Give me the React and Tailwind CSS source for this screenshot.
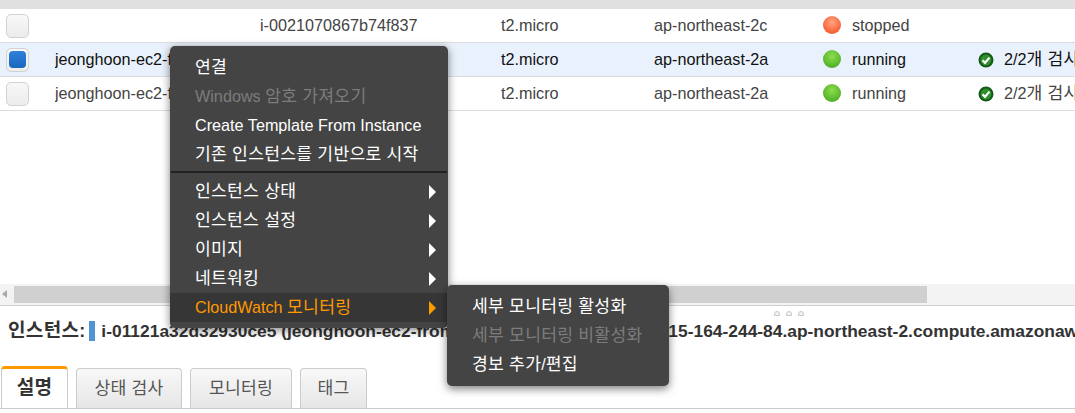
const font = "[font-family:'Liberation_Sans','Noto_Sans_CJK_KR',sans-serif]";

const rows = [
  { name: "", id: "i-0021070867b74f837", az: "ap-northeast-2c", state: "stopped", checks: false, selected: false },
  { name: "jeonghoon-ec2-f", id: "", az: "ap-northeast-2a", state: "running", checks: true, selected: true },
  { name: "jeonghoon-ec2-f", id: "", az: "ap-northeast-2a", state: "running", checks: true, selected: false },
];

// hangul runs render a bit larger than the latin text around them
function Ko({ text }) {
  return text.split(/([가-힣]+(?: [가-힣]+)*)/).map((part, i) =>
    i % 2 ? (
      <span key={i} className="text-[1.06em] tracking-[0.015em]">
        {part}
      </span>
    ) : (
      part
    )
  );
}

function StateDot({ state }) {
  const color =
    state === "running"
      ? "bg-[radial-gradient(circle_at_50%_35%,#8fdc4f,#56b82a_65%,#3f9a1e)]"
      : "bg-[radial-gradient(circle_at_50%_35%,#ffa680,#f8653a_65%,#e04a20)]";
  return <span className={`h-[18px] w-[18px] shrink-0 rounded-full ${color}`} />;
}

function CheckIcon() {
  return (
    <svg width="16" height="16" viewBox="0 0 16 16" className="shrink-0">
      <circle cx="8" cy="8" r="7.5" fill="#14591a" />
      <circle cx="8" cy="8" r="5.5" fill="#2f8f2a" />
      <path d="M4.5 8.2 L7 10.8 L11.5 5.6" fill="none" stroke="#fff" strokeWidth="2.2" />
    </svg>
  );
}

function Row({ row }) {
  return (
    <div
      className={`flex h-[34px] items-center border-b border-[#dcdcdc] ${
        row.selected ? "bg-[#e9f1fc] text-[#111]" : "bg-white text-[#444]"
      }`}
    >
      <div className="ml-[6px] flex h-[24px] w-[23px] shrink-0 items-center justify-center rounded-[5px] border border-[#d2d2d2] bg-gradient-to-b from-[#f8f8f8] to-[#ececec]">
        {row.selected && <span className="h-[17px] w-[17px] rounded-[4px] bg-gradient-to-b from-[#2f80dc] to-[#1a66bd]" />}
      </div>
      <div className="ml-[26px] w-[205px] shrink-0 overflow-hidden whitespace-nowrap">{row.name}</div>
      <div className="w-[241px] shrink-0">{row.id}</div>
      <div className="w-[153px] shrink-0">t2.micro</div>
      <div className="w-[169px] shrink-0">{row.az}</div>
      <div className="flex w-[155px] shrink-0 items-center gap-[11px]">
        <StateDot state={row.state} />
        {row.state}
      </div>
      {row.checks && (
        <div className="flex items-center gap-[10px] whitespace-nowrap">
          <CheckIcon />
          <span>
            <Ko text="2/2개 검사" />
          </span>
        </div>
      )}
    </div>
  );
}

function Arrow({ orange }) {
  return (
    <span
      className={`h-0 w-0 border-y-[7px] border-l-[7px] border-y-transparent ${
        orange ? "border-l-[#ff9900]" : "border-l-white"
      }`}
    />
  );
}

function MenuItem({ label, disabled, arrow, active }) {
  return (
    <div
      className={`flex h-[29px] items-center justify-between pl-[25px] pr-[12px] ${
        active ? "bg-[#363636] text-[#ff9900]" : disabled ? "text-[#7c7c7c]" : "text-white"
      }`}
    >
      <span className="whitespace-nowrap">
        <Ko text={label} />
      </span>
      {arrow && <Arrow orange={active} />}
    </div>
  );
}

function Tab({ label, active }) {
  return (
    <div
      className={
        active
          ? "flex h-[42px] w-[67px] items-center justify-center rounded-t-[4px] border-x border-t-[3px] border-x-[#ccc] border-t-[#ff9900] bg-white text-[18px] font-bold text-[#333]"
          : "flex h-[40px] items-center justify-center rounded-t-[4px] border border-b-0 border-[#ccc] bg-gradient-to-b from-[#f8f8f8] to-[#e6e6e6] text-[#555]"
      }
    >
      <span>
        <Ko text={label} />
      </span>
    </div>
  );
}

export default function App() {
  return (
    <div className={`relative flex h-[413px] w-[1075px] flex-col overflow-hidden bg-white text-[16.2px] ${font}`}>
      <div className="h-[9px] shrink-0 bg-[#e0e0e0]" />
      {rows.map((row, i) => (
        <Row key={i} row={row} />
      ))}

      <div className="mt-[173px] flex h-[22px] shrink-0 items-center border-b border-[#d0d0d0] bg-[#f3f3f3] pb-[1px]">
        <span className="ml-[2px] h-0 w-0 border-y-[4px] border-r-[5px] border-y-transparent border-r-[#aaa]" />
        <div className="ml-[7px] h-[17px] w-[913px] bg-[#d0d0d0]" />
      </div>

      <div className="mt-[5px] flex shrink-0 gap-[6px] pl-[774px]">
        <span className="h-[5px] w-[6px] rounded-t-full border border-[#c8c8c8] bg-[#f2f2f2]" />
        <span className="h-[5px] w-[6px] rounded-t-full border border-[#c8c8c8] bg-[#f2f2f2]" />
        <span className="h-[5px] w-[6px] rounded-t-full border border-[#c8c8c8] bg-[#f2f2f2]" />
      </div>

      <div className="mt-[3px] flex h-[24px] shrink-0 items-center whitespace-nowrap pl-[8px] text-[17.4px] font-bold text-[#333]">
        <span className="text-[18px]">
          <Ko text="인스턴스:" />
        </span>
        <span className="ml-[4px] mr-[6px] h-[20px] w-[6px] shrink-0 bg-[#5094d4]" />
        <span>i-01121a32d32930ce5 (jeonghoon-ec2-from-ami) | 퍼블릭 DNS:</span>
        <span className="ml-[27px]">ec2-15-164-244-84.ap-northeast-2.compute.amazonaws.com</span>
      </div>

      <div className="mt-auto flex h-[42px] shrink-0 items-end gap-[8px] pl-[1px]">
        <Tab label="설명" active />
        <div className="w-[106px]"><Tab label="상태 검사" /></div>
        <div className="w-[102px]"><Tab label="모니터링" /></div>
        <div className="w-[67px]"><Tab label="태그" /></div>
      </div>
      <div className="mb-[4px] h-px shrink-0 bg-[#ccc]" />

      {/* context menu */}
      <div className="absolute left-[170px] top-[46px] w-[278px] rounded-[5px] bg-[#444] pb-[6px] pt-[7px] shadow-[0_2px_8px_rgba(0,0,0,0.5)]">
        <MenuItem label="연결" />
        <MenuItem label="Windows 암호 가져오기" disabled />
        <MenuItem label="Create Template From Instance" />
        <MenuItem label="기존 인스턴스를 기반으로 시작" />
        <div className="mx-[1px] mb-[4px] mt-[2px] h-[2px] bg-[#222]" />
        <MenuItem label="인스턴스 상태" arrow />
        <MenuItem label="인스턴스 설정" arrow />
        <MenuItem label="이미지" arrow />
        <MenuItem label="네트워킹" arrow />
        <MenuItem label="CloudWatch 모니터링" arrow active />
      </div>

      {/* submenu */}
      <div className="absolute left-[447px] top-[285px] w-[222px] rounded-[5px] bg-[#444] py-[7px] shadow-[0_3px_8px_rgba(0,0,0,0.5)]">
        <MenuItem label="세부 모니터링 활성화" />
        <MenuItem label="세부 모니터링 비활성화" disabled />
        <MenuItem label="경보 추가/편집" />
      </div>
    </div>
  );
}
